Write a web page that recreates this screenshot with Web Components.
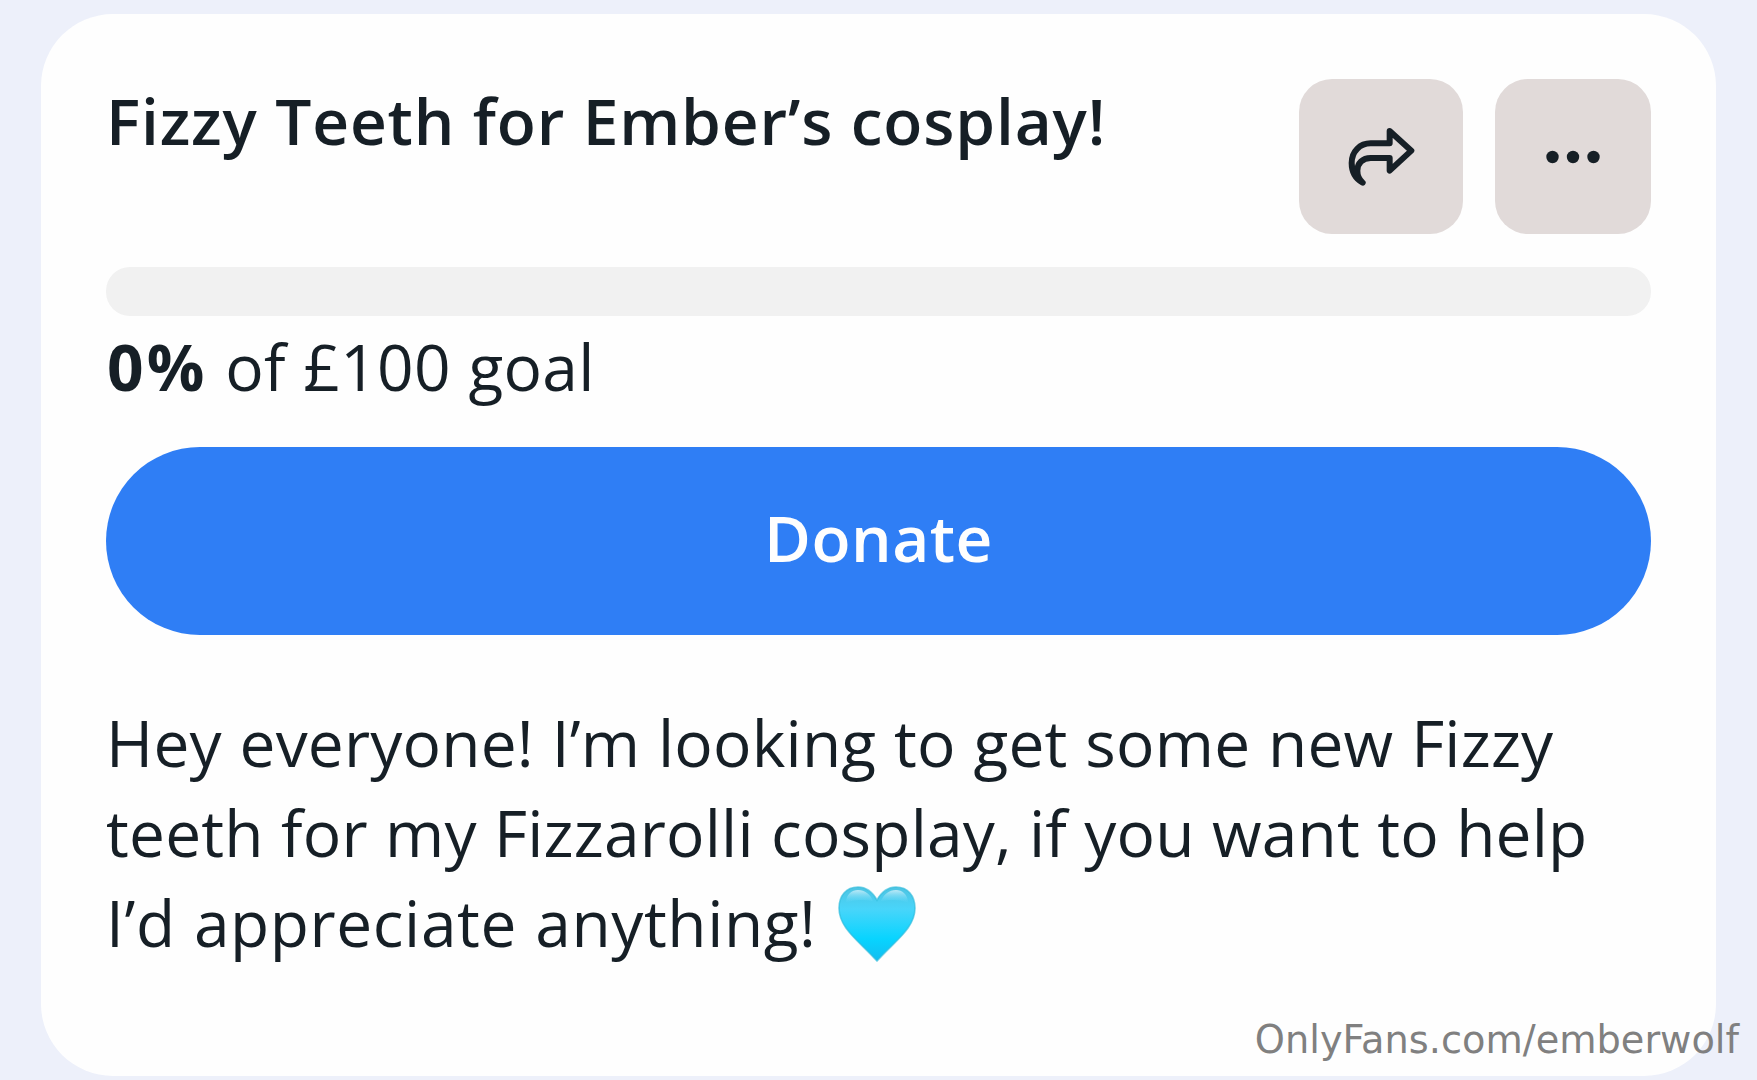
<!DOCTYPE html>
<html lang="en">
<head>
<meta charset="utf-8">
<title>Wishlist goal</title>
<style>
body {
    margin: 0;
    height: 1080px;
    overflow: hidden;
    background-color: #edf0fa;
    color: #161f26;
    font-family: "Open Sans", "Noto Sans", sans-serif;
    font-size: 64px;
}
.l1 { letter-spacing: 0.2px; word-spacing: 0.9px; }
.l2 { letter-spacing: 0.2px; word-spacing: 0.4px; }
.l3 { letter-spacing: 0.6px; word-spacing: 1px; }
</style>
</head>
<body>
<goal-card>
    <span slot="title">Fizzy Teeth for Ember’s cosplay!</span>
    <icon-button slot="actions" data-icon="share" data-label="Share"></icon-button>
    <icon-button slot="actions" data-icon="more" data-label="More"></icon-button>
    <goal-progress data-percent="0" data-goal="£100"></goal-progress>
    <donate-button>Donate</donate-button>
    <goal-text>
        <div class="l1">Hey everyone! I’m looking to get some new Fizzy</div>
        <div class="l2">teeth for my Fizzarolli cosplay, if you want to help</div>
        <div class="l3">I’d appreciate anything! <blue-heart></blue-heart></div>
    </goal-text>
</goal-card>
<page-watermark>OnlyFans.com/emberwolf</page-watermark>

<script>
const icons = {
    share: `<svg width="68" height="60" viewBox="50 50 204 180">
        <path d="M97 217C77 206 64 186 64 158C64 123 89 99 121 99H178V62L243 121L178 181V143H121C97 143 81 158 81 181C81 197 88 209 97 217Z"
            fill="none" stroke="#161f26" stroke-width="18" stroke-linejoin="round"/>
        <path d="M64 172L82 178L86 200L96 214L76 200Z" fill="#161f26"/>
    </svg>`,
    more: `<svg width="56" height="14" viewBox="0 0 56 14" fill="#161f26">
        <circle cx="7.5" cy="7" r="6.2"/><circle cx="28" cy="7" r="6.2"/><circle cx="48.5" cy="7" r="6.2"/>
    </svg>`
};

class GoalCard extends HTMLElement {
    constructor() {
        super();
        this.attachShadow({mode: "open"});
        this.shadowRoot.innerHTML = `
<style>
:host {
    display: flex;
    flex-direction: column;
    box-sizing: border-box;
    width: 1675px;
    height: 1062px;
    margin: 14px 0 0 41px;
    padding: 65px 65px 0;
    border-radius: 72px;
    background-color: #fefefe;
}
header {
    display: flex;
    justify-content: space-between;
    height: 188px;
}
h1 {
    margin: -2px 0 0;
    font-size: 64px;
    font-weight: 600;
    line-height: 88px;
    white-space: nowrap;
    letter-spacing: 0.85px;
}
.actions {
    display: flex;
    gap: 32px;
}
</style>
<header>
    <h1><slot name="title"></slot></h1>
    <div class="actions"><slot name="actions"></slot></div>
</header>
<slot></slot>`;
    }
}
customElements.define("goal-card", GoalCard);

class IconButton extends HTMLElement {
    constructor() {
        super();
        this.attachShadow({mode: "open"});
    }

    connectedCallback() {
        const icon = this.dataset.icon;
        this.shadowRoot.innerHTML = `
<style>
button {
    display: flex;
    align-items: center;
    justify-content: center;
    width: ${icon === "share" ? 164 : 156}px;
    height: 155px;
    padding: 0;
    border: 0;
    border-radius: 33px;
    background-color: #e1dad9;
}
</style>
<button aria-label="${this.dataset.label}">${icons[icon]}</button>`;
    }
}
customElements.define("icon-button", IconButton);

class GoalProgress extends HTMLElement {
    constructor() {
        super();
        this.attachShadow({mode: "open"});
    }

    connectedCallback() {
        const percent = this.dataset.percent;
        this.shadowRoot.innerHTML = `
<style>
:host {
    display: block;
    height: 180px;
}
.track {
    height: 49px;
    border-radius: 24px;
    overflow: hidden;
    background-color: #f1f1f1;
}
.fill {
    width: ${percent}%;
    height: 100%;
    background-color: #2f7ef5;
}
p {
    margin: 7px 0 0 1px;
    line-height: 88px;
    white-space: nowrap;
    letter-spacing: 0.3px;
    word-spacing: 0.6px;
}
b {
    font-weight: 700;
    letter-spacing: 3.2px;
}
</style>
<div class="track"><div class="fill"></div></div>
<p><b>${percent}%</b> of ${this.dataset.goal} goal</p>`;
    }
}
customElements.define("goal-progress", GoalProgress);

class DonateButton extends HTMLElement {
    constructor() {
        super();
        this.attachShadow({mode: "open"});
        this.shadowRoot.innerHTML = `
<style>
button {
    display: block;
    width: 100%;
    height: 188px;
    padding: 0 0 7px;
    border: 0;
    border-radius: 94px;
    background-color: #2f7ef5;
    color: #fefefe;
    font: 600 64px "Open Sans", sans-serif;
    letter-spacing: 0.5px;
}
</style>
<button><slot></slot></button>`;
    }
}
customElements.define("donate-button", DonateButton);

class GoalText extends HTMLElement {
    constructor() {
        super();
        this.attachShadow({mode: "open"});
        this.shadowRoot.innerHTML = `
<style>
:host {
    display: block;
    padding: 63px 0 0;
    line-height: 90px;
    white-space: nowrap;
}
</style>
<slot></slot>`;
    }
}
customElements.define("goal-text", GoalText);

class BlueHeart extends HTMLElement {
    constructor() {
        super();
        this.attachShadow({mode: "open"});
        this.shadowRoot.innerHTML = `
<style>
:host {
    display: inline-block;
    height: 76px;
    margin-left: 3px;
    line-height: 0;
    vertical-align: -15px;
}
</style>
<svg width="78" height="76" viewBox="0 0 78 76">
    <defs>
        <linearGradient id="body" x1="0" y1="0" x2="0" y2="1">
            <stop offset="0" stop-color="#4fc4e2"/>
            <stop offset=".3" stop-color="#48d5fa"/>
            <stop offset=".7" stop-color="#08d4ff"/>
            <stop offset="1" stop-color="#12bdf0"/>
        </linearGradient>
        <linearGradient id="shine" x1="0" y1="0" x2="0" y2="1">
            <stop offset="0" stop-color="#d8f2fb" stop-opacity=".8"/>
            <stop offset="1" stop-color="#6fdcfb" stop-opacity="0"/>
        </linearGradient>
    </defs>
    <path d="M39 14C34 5 27 1 20 1C8 1 1 10 1 22C1 42 20 54 39 75C58 54 77 42 77 22C77 10 70 1 58 1C51 1 44 5 39 14Z" fill="url(#body)" stroke="#2fbbdc" stroke-opacity=".65" stroke-width="1.6"/>
    <path d="M8 17C8 8 14 4 20 4C27 4 32 8 35 15C26 14 17 13 8 17Z" fill="url(#shine)"/>
    <path d="M70 17C70 8 64 4 58 4C51 4 46 8 43 15C52 14 61 13 70 17Z" fill="url(#shine)"/>
</svg>`;
    }
}
customElements.define("blue-heart", BlueHeart);

class PageWatermark extends HTMLElement {
    constructor() {
        super();
        this.attachShadow({mode: "open"});
        this.shadowRoot.innerHTML = `
<style>
:host {
    position: absolute;
    right: 18px;
    bottom: 18px;
    color: #808080;
    font: 38.3px/44px "DejaVu Sans", sans-serif;
}
</style>
<slot></slot>`;
    }
}
customElements.define("page-watermark", PageWatermark);
</script>
</body>
</html>
